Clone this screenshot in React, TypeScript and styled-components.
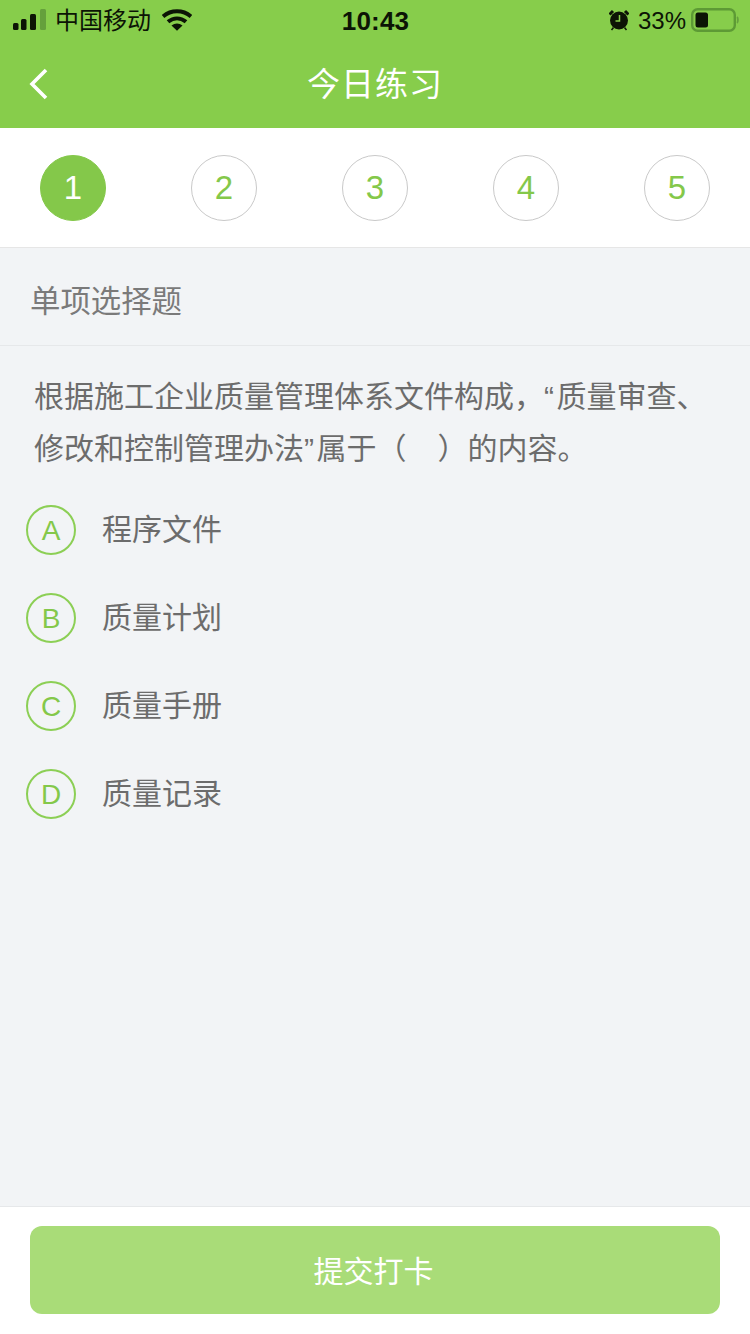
import React from "react";
import styled, { createGlobalStyle } from "styled-components";

const Global = createGlobalStyle`
  html, body { margin: 0; padding: 0; background: #f2f4f6; }
  * { box-sizing: border-box; }
  body { font-family: "Liberation Sans", "Noto Sans CJK SC", sans-serif; }
`;
const Page = styled.div`
  width: 750px; height: 1334px; display: flex; flex-direction: column; background: #f2f4f6; overflow: hidden;
`;
const Header = styled.header`
  height: 128px; background: #87cd4b; display: flex; flex-direction: column;
`;
const StatusBar = styled.div`
  height: 40px; padding: 0 11px 0 13px; display: grid; grid-template-columns: 1fr auto 1fr; align-items: center; color: #0c1405;
`;
const StatusLeft = styled.div`
  display: flex; align-items: center; font-size: 24px;
`;
const Carrier = styled.span`
  margin-left: 9px; margin-right: 11px; line-height: 24px; padding-top: 1px;
`;
const Time = styled.div`
  font-size: 26px; font-weight: 700; letter-spacing: 0.2px; line-height: 26px; padding-top: 2px; margin-left: -1px;
`;
const StatusRight = styled.div`
  display: flex; align-items: center; justify-content: flex-end; font-size: 24px;
`;
const Percent = styled.span`
  margin-left: 9px; margin-right: 5px; line-height: 24px; padding-top: 2px;
`;
const NavBar = styled.div`
  flex: 1; position: relative; display: flex; align-items: center; justify-content: center; padding-bottom: 4px;
`;
const Back = styled.svg`
  position: absolute; left: 29px; top: 28px;
`;
const Title = styled.h1`
  margin: 0; color: #fff; font-size: 33px; font-weight: 400; letter-spacing: 1px;
`;
const Steps = styled.div`
  height: 120px; background: #fff; border-bottom: 1px solid #e6e6e6; padding: 0 40px 0; display: flex; align-items: center; justify-content: space-between;
`;
const Step = styled.div<{ $active?: boolean }>`
  width: 66px; height: 66px; border-radius: 50%; display: flex; align-items: center; justify-content: center;
  font-size: 33px; margin-top: 1px;
  color: ${(p) => (p.$active ? "#fff" : "#84c84a")};
  background: ${(p) => (p.$active ? "#84c84a" : "#fff")};
  border: 1px solid ${(p) => (p.$active ? "#84c84a" : "#c9c9c9")};
`;
const SectionTitle = styled.div`
  height: 98px; padding: 4px 0 0 30px; display: flex; align-items: center; border-bottom: 1px solid #e6e8ea;
  font-size: 30.4px; color: #7a7a7a;
`;
const Question = styled.p`
  margin: 0; padding: 25px 34px 0; font-size: 30px; line-height: 52px; color: #6c6c6c;
`;
const Options = styled.div`
  display: flex; flex-direction: column; gap: 38px; padding: 30px 0 0 26px;
`;
const Option = styled.div`
  display: flex; align-items: center; height: 50px;
`;
const Letter = styled.div`
  width: 50px; height: 50px; border-radius: 50%; border: 2px solid #8ccf55; color: #84c84a;
  display: flex; align-items: center; justify-content: center; font-size: 28px; margin-right: 26px; padding-top: 2px;
`;
const OptionText = styled.span`
  font-size: 30px; color: #6c6c6c; margin-bottom: 6px;
`;
const Spacer = styled.div`flex: 1;`;
const Footer = styled.footer`
  height: 128px; background: #fff; border-top: 1px solid #e6e8ea; padding: 19px 30px 0;
`;
const Submit = styled.button`
  width: 690px; height: 88px; border: 0; border-radius: 12px; background: #a9dc78; color: #fff;
  font-family: inherit; font-size: 30px; display: block; padding: 0 3px 2px 0;
`;

const questionText =
  "根据施工企业质量管理体系文件构成，“\u200A质量审查、修改和控制管理办法”\u200A属于（\u00A0\u00A0\u00A0\u2009）的内容。";

export default function App() {
  return (
    <Page>
      <Global />
      <Header>
        <StatusBar>
          <StatusLeft>
            <svg width="33" height="22" viewBox="0 0 33 22">
              <rect x="0" y="14" width="5.500" height="7" rx="1.500" fill="#0c1405" />
              <rect x="8" y="10" width="5.500" height="11" rx="1.500" fill="#0c1405" />
              <rect x="17" y="5" width="6" height="16" rx="1.500" fill="#0c1405" />
              <rect x="27" y="0" width="6" height="21" rx="1.500" fill="#65a03c" />
            </svg>
            <Carrier>中国移动</Carrier>
            <svg width="30" height="22" viewBox="0 0 30 22">
              <path d="M1 7.500C9 .5 21 .5 29 7.500" fill="none" stroke="#0c1405" strokeWidth="4" />
              <path d="M6 12.800c5.500-4.500 12.500-4.500 18 0" fill="none" stroke="#0c1405" strokeWidth="4" />
              <path d="M9.500 16.600c3.400-2.800 7.600-2.800 11 0L15 21.800z" fill="#0c1405" />
            </svg>
          </StatusLeft>
          <Time>10:43</Time>
          <StatusRight>
            <svg width="20" height="22" viewBox="1 0 20 22">
              <circle cx="11" cy="11.500" r="9" fill="#0c1405" />
              <path d="M1.500 5.500 5 2 M20.500 5.500 17 2" stroke="#0c1405" strokeWidth="3" />
              <path d="M3.500 21 5.500 18.500M18.500 21 16.500 18.500" stroke="#0c1405" strokeWidth="1.500" />
              <path d="M11.500 6V12H7.500" fill="none" stroke="#87cd4b" strokeWidth="1.500" />
            </svg>
            <Percent>33%</Percent>
            <svg width="48" height="24" viewBox="0 0 48 24">
              <rect x="1.200" y="1.200" width="42.600" height="21.600" rx="5.500" fill="none" stroke="#5d9a35" strokeWidth="2.400" />
              <rect x="4.500" y="4.500" width="12.500" height="15" rx="2.500" fill="#0c1405" />
              <path d="M46 9c1.200.8 1.200 5.200 0 6" fill="none" stroke="#65a03c" strokeWidth="1.800" />
            </svg>
          </StatusRight>
        </StatusBar>
        <NavBar>
          <Back width="20" height="32" viewBox="0 0 20 32">
            <path d="M17 2 3 16l14 14" fill="none" stroke="#fff" strokeWidth="3.600" />
          </Back>
          <Title>今日练习</Title>
        </NavBar>
      </Header>
      <Steps>
        <Step $active>1</Step>
        <Step>2</Step>
        <Step>3</Step>
        <Step>4</Step>
        <Step>5</Step>
      </Steps>
      <SectionTitle>单项选择题</SectionTitle>
      <Question>{questionText}</Question>
      <Options>
        <Option><Letter>A</Letter><OptionText>程序文件</OptionText></Option>
        <Option><Letter>B</Letter><OptionText>质量计划</OptionText></Option>
        <Option><Letter>C</Letter><OptionText>质量手册</OptionText></Option>
        <Option><Letter>D</Letter><OptionText>质量记录</OptionText></Option>
      </Options>
      <Spacer />
      <Footer>
        <Submit>提交打卡</Submit>
      </Footer>
    </Page>
  );
}
